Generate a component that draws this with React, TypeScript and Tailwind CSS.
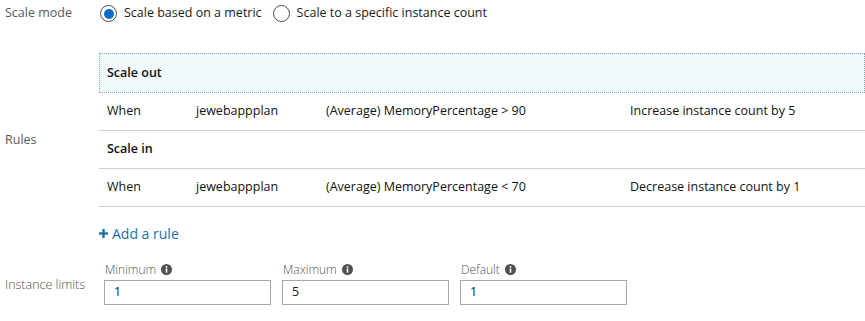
import React from 'react';

const InfoIcon = () => (
  <svg viewBox="0 0 12 12" className="w-[11px] h-[11px] ml-[5px] inline-block">
    <circle cx="6" cy="6" r="6" fill="#505050" />
    <rect x="5.1" y="5" width="1.8" height="4.4" fill="#fff" />
    <circle cx="6" cy="3.2" r="1" fill="#fff" />
  </svg>
);

const Radio = ({ checked, label }: { checked: boolean; label: string }) => (
  <label className="flex items-center">
    <span className="w-[17px] h-[17px] rounded-full border border-[#4a4a4a] flex items-center justify-center">
      {checked && <span className="w-[10px] h-[10px] rounded-full bg-[#0f6cc9]" />}
    </span>
    <span className="ml-[7px] text-[#1a1a1a]">{label}</span>
  </label>
);

const rules = [
  { kind: 'Scale out', when: 'When', res: 'jewebappplan', metric: '(Average) MemoryPercentage > 90', action: 'Increase instance count by 5' },
  { kind: 'Scale in', when: 'When', res: 'jewebappplan', metric: '(Average) MemoryPercentage < 70', action: 'Decrease instance count by 1' },
];

const LimitField = ({ label, value }: { label: string; value: string }) => (
  <div className="flex flex-col w-[167px]">
    <div className="flex items-center h-[17px] pl-[1px] text-[12px] text-[#505050] font-light">
      {label}
      <InfoIcon />
    </div>
    <div className="mt-[2px] h-[25px] border border-[#a6a6a6] flex items-center pl-[9px] text-[#1a1a1a]">{value}</div>
  </div>
);

export default function App() {
  return (
    <div className="w-[865px] h-[321px] bg-white text-[12.5px] overflow-hidden" style={{ fontFamily: '"Open Sans", sans-serif' }}>
      {/* Scale mode */}
      <div className="flex items-center h-[26px] pt-[1px]">
        <div className="w-[100px] pl-[5px] text-[#595959]">Scale mode</div>
        <div className="flex items-center gap-[11px]">
          <Radio checked label="Scale based on a metric" />
          <Radio checked={false} label="Scale to a specific instance count" />
        </div>
      </div>

      {/* Rules */}
      <div className="flex mt-[27px]">
        <div className="w-[99px] pl-[5px] pt-[78px] text-[#595959]">Rules</div>
        <div className="flex-1 text-[#111]">
          {rules.map((r, i) => (
            <React.Fragment key={r.kind}>
              {i === 0 ? (
                <div className="h-[40px] border border-dotted border-[#7fa9b8] bg-[#f1f9fd] flex items-center pl-[7px] font-semibold">
                  {r.kind}
                </div>
              ) : (
                <div className="h-[38px] border-b border-[#cfcfcf] flex items-center pl-[8px] font-semibold">{r.kind}</div>
              )}
              <div className="h-[38px] border-b border-[#cfcfcf] flex items-center pl-[8px]">
                <span className="w-[89px]">{r.when}</span>
                <span className="w-[130px]">{r.res}</span>
                <span className="w-[304px]">{r.metric}</span>
                <span>{r.action}</span>
              </div>
            </React.Fragment>
          ))}
          <div className="flex items-center h-[22px] mt-[15px] text-[#1e6fa8] text-[14px]">
            <svg viewBox="0 0 10 10" className="w-[9px] h-[9px] mr-[4px]">
              <rect x="3.7" y="0" width="2.6" height="10" fill="#1e6fa8" />
              <rect x="0" y="3.7" width="10" height="2.6" fill="#1e6fa8" />
            </svg>
            Add a rule
          </div>
        </div>
      </div>

      {/* Instance limits */}
      <div className="flex mt-[17px]">
        <div className="w-[104px] pl-[5px] pt-[15px] text-[12.5px] text-[#505050] font-light">Instance limits</div>
        <div className="flex gap-[11px]">
          <LimitField label="Minimum" value="1" />
          <LimitField label="Maximum" value="5" />
          <LimitField label="Default" value="1" />
        </div>
      </div>
    </div>
  );
}
